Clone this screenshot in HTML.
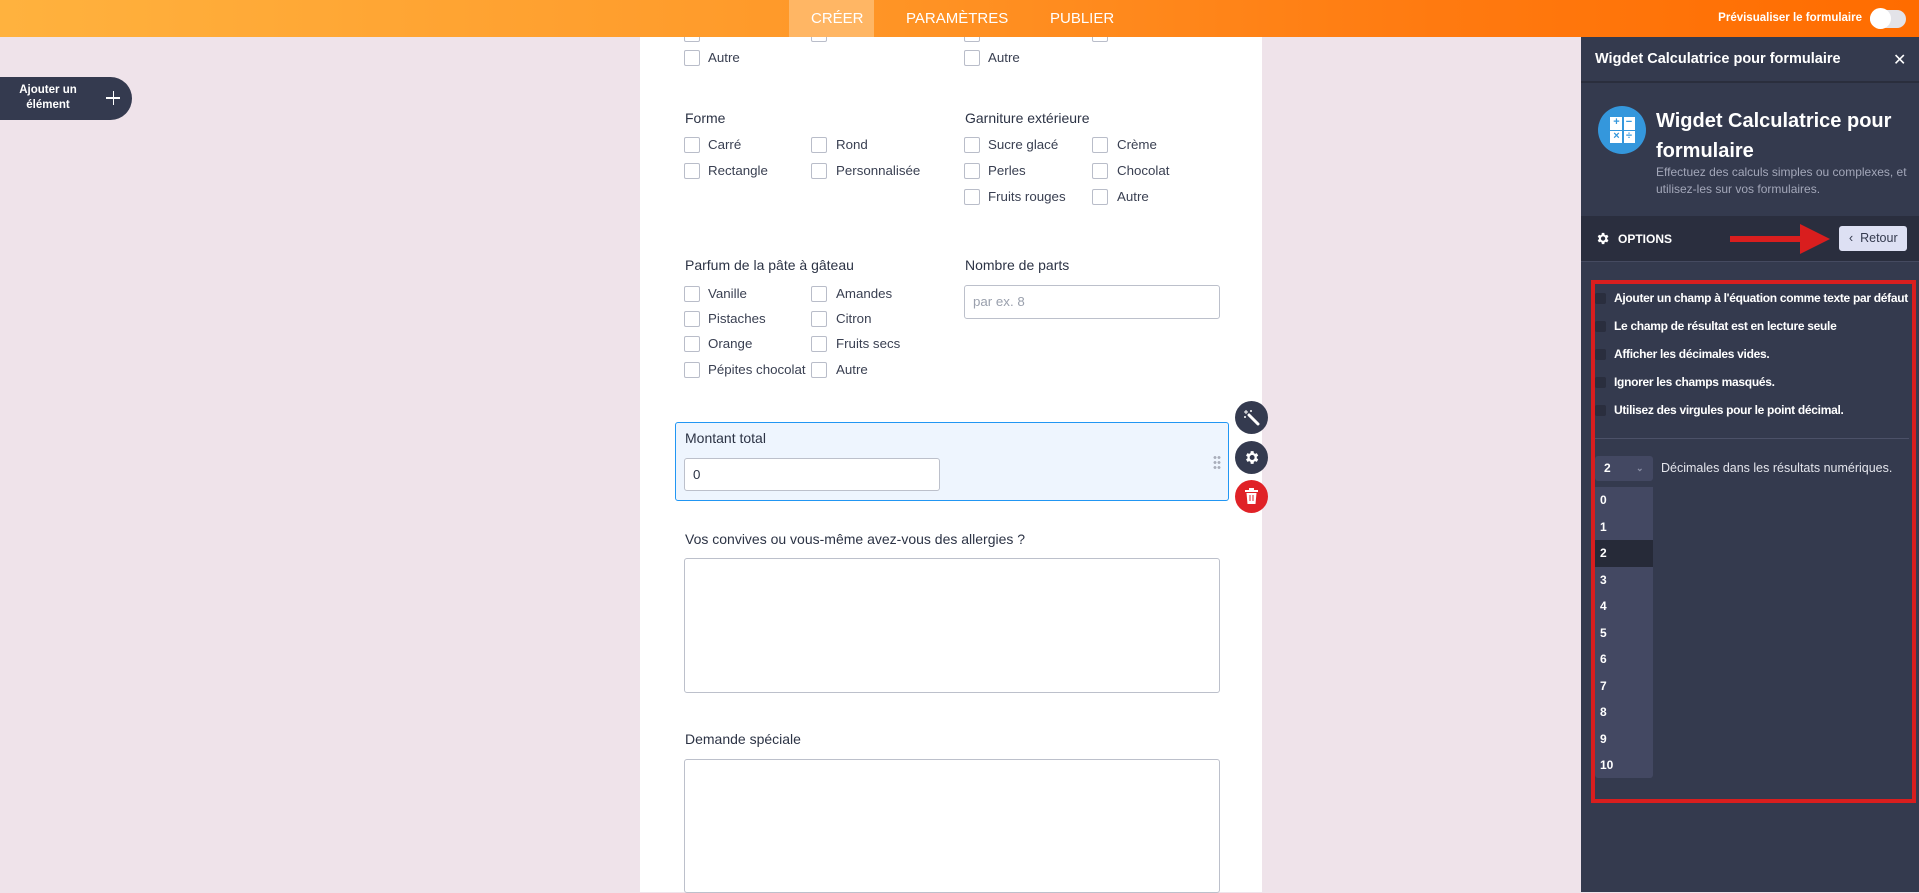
<!DOCTYPE html>
<html><head><meta charset="utf-8"><style>
*{box-sizing:border-box;margin:0;padding:0}
body{width:1919px;height:892px;overflow:hidden;background:#efe3ea;font-family:"Liberation Sans",sans-serif;position:relative}
.abs{position:absolute}
.top{left:0;top:0;width:1919px;height:37px;background:linear-gradient(90deg,#ffb23e 0%,#ff9a2a 40%,#ff7a10 75%,#ff6c00 100%);z-index:5}
.tab{position:absolute;top:0;height:37px;line-height:37px;color:#fff;font-size:15px;letter-spacing:0}
.card{left:640px;top:0;width:622px;height:892px;background:#fff}
.cb{position:absolute;width:16px;height:16px;border:1px solid #b9bdc9;border-radius:2px;background:#fff}
.t{position:absolute;font-size:13.3px;color:#3a4052;white-space:nowrap}
.lbl{position:absolute;font-size:14px;color:#2c3345;white-space:nowrap}
.inp{position:absolute;border:1px solid #bcc0cb;border-radius:3px;background:#fff}
.circ{position:absolute;width:33px;height:33px;border-radius:50%;background:#343a4f}
.panel{left:1581px;top:37px;width:338px;height:855px;background:#343a4e}
.opt{position:absolute;left:1614px;font-size:12px;font-weight:bold;color:#fff;white-space:nowrap;letter-spacing:-.3px}
.ocb{position:absolute;left:1595px;width:11px;height:11px;background:#2a2e3e;border-radius:2px}
.dd div{height:26.5px;line-height:26.5px;padding-left:5px;color:#fff;font-size:12px;font-weight:bold}
</style></head><body>
<div class="abs top">
  <div class="abs" style="left:789px;top:0;width:85px;height:37px;background:#ffb664"></div>
  <div class="tab" style="left:811px">CRÉER</div>
  <div class="tab" style="left:906px">PARAMÈTRES</div>
  <div class="tab" style="left:1050px">PUBLIER</div>
  <div class="tab" style="left:1660px;width:202px;text-align:right;font-size:11.5px;font-weight:bold">Prévisualiser le formulaire</div>
  <div class="abs" style="left:1870px;top:10px;width:36px;height:18px;border-radius:9px;background:#e3e3e8"></div>
  <div class="abs" style="left:1870px;top:8px;width:21px;height:21px;border-radius:50%;background:#fff"></div>
</div>

<div class="abs" style="left:0;top:77px;width:132px;height:43px;background:#343a4f;border-radius:0 22px 22px 0"></div>
<div class="abs" style="left:14px;top:83px;width:68px;text-align:center;color:#fff;font-size:11.5px;font-weight:bold;line-height:15px">Ajouter un élément</div>
<div class="abs" style="left:106px;top:97px;width:14px;height:1.5px;background:#fff"></div>
<div class="abs" style="left:112.5px;top:91px;width:1.5px;height:14px;background:#fff"></div>

<div class="abs card"></div>
<div class="cb" style="left:684px;top:26px"></div><div class="cb" style="left:811px;top:26px"></div><div class="cb" style="left:964px;top:26px"></div><div class="cb" style="left:1092px;top:26px"></div>
<div class="cb" style="left:684px;top:50px"></div><div class="t" style="left:708px;top:50px">Autre</div>
<div class="cb" style="left:964px;top:50px"></div><div class="t" style="left:988px;top:50px">Autre</div>

<div class="lbl" style="left:685px;top:110px">Forme</div>
<div class="lbl" style="left:965px;top:110px">Garniture extérieure</div>
<div class="cb" style="left:684px;top:137px"></div><div class="t" style="left:708px;top:137px">Carré</div>
<div class="cb" style="left:811px;top:137px"></div><div class="t" style="left:836px;top:137px">Rond</div>
<div class="cb" style="left:964px;top:137px"></div><div class="t" style="left:988px;top:137px">Sucre glacé</div>
<div class="cb" style="left:1092px;top:137px"></div><div class="t" style="left:1117px;top:137px">Crème</div>
<div class="cb" style="left:684px;top:163px"></div><div class="t" style="left:708px;top:163px">Rectangle</div>
<div class="cb" style="left:811px;top:163px"></div><div class="t" style="left:836px;top:163px">Personnalisée</div>
<div class="cb" style="left:964px;top:163px"></div><div class="t" style="left:988px;top:163px">Perles</div>
<div class="cb" style="left:1092px;top:163px"></div><div class="t" style="left:1117px;top:163px">Chocolat</div>
<div class="cb" style="left:964px;top:189px"></div><div class="t" style="left:988px;top:189px">Fruits rouges</div>
<div class="cb" style="left:1092px;top:189px"></div><div class="t" style="left:1117px;top:189px">Autre</div>

<div class="lbl" style="left:685px;top:257px">Parfum de la pâte à gâteau</div>
<div class="lbl" style="left:965px;top:257px">Nombre de parts</div>
<div class="inp" style="left:964px;top:285px;width:256px;height:34px"></div>
<div class="t" style="left:973px;top:294px;color:#9aa0ad">par ex. 8</div>
<div class="cb" style="left:684px;top:286px"></div><div class="t" style="left:708px;top:286px">Vanille</div>
<div class="cb" style="left:811px;top:286px"></div><div class="t" style="left:836px;top:286px">Amandes</div>
<div class="cb" style="left:684px;top:311px"></div><div class="t" style="left:708px;top:311px">Pistaches</div>
<div class="cb" style="left:811px;top:311px"></div><div class="t" style="left:836px;top:311px">Citron</div>
<div class="cb" style="left:684px;top:336px"></div><div class="t" style="left:708px;top:336px">Orange</div>
<div class="cb" style="left:811px;top:336px"></div><div class="t" style="left:836px;top:336px">Fruits secs</div>
<div class="cb" style="left:684px;top:362px"></div><div class="t" style="left:708px;top:362px">Pépites chocolat</div>
<div class="cb" style="left:811px;top:362px"></div><div class="t" style="left:836px;top:362px">Autre</div>

<div class="abs" style="left:675px;top:422px;width:554px;height:79px;background:#eef5fe;border:1.5px solid #2196f3;border-radius:3px"></div>
<div class="lbl" style="left:685px;top:430px">Montant total</div>
<div class="inp" style="left:684px;top:458px;width:256px;height:33px"></div>
<div class="t" style="left:693px;top:467px;color:#2c3345">0</div>
<div class="abs" style="left:1213px;top:455px;width:8px;height:15px;background:radial-gradient(circle,#a9aebb 1.3px,transparent 1.6px) 0 0/4px 5px"></div>
<div class="circ" style="left:1235px;top:401px"></div>
<svg class="abs" style="left:1243px;top:409px" width="17" height="17" viewBox="0 0 17 17"><path d="M6 6L15 15" stroke="#fff" stroke-width="3" stroke-linecap="round"/><path d="M3 1v4M1 3h4M8 1v2M7 2h2M1 8h2M2 7v2" stroke="#fff" stroke-width="1"/></svg>
<div class="circ" style="left:1235px;top:441px"></div>
<svg class="abs" style="left:1243px;top:449px" width="17" height="17" viewBox="0 0 24 24"><path fill="#fff" d="M19.4 13a7.5 7.5 0 000-2l2.1-1.6-2-3.5-2.5 1a7 7 0 00-1.7-1L14.9 3h-4l-.4 2.9a7 7 0 00-1.7 1l-2.5-1-2 3.5L6.4 11a7.5 7.5 0 000 2l-2.1 1.6 2 3.5 2.5-1a7 7 0 001.7 1l.4 2.9h4l.4-2.9a7 7 0 001.7-1l2.5 1 2-3.5zM12.9 15.5a3.5 3.5 0 110-7 3.5 3.5 0 010 7z"/></svg>
<div class="circ" style="left:1235px;top:480px;background:#e02227"></div>
<svg class="abs" style="left:1244px;top:488px" width="15" height="17" viewBox="0 0 15 17"><rect x="1" y="2" width="13" height="2" fill="#fff"/><rect x="5" y="0" width="5" height="2" fill="#fff"/><path d="M2.5 5h10l-1 11h-8z" fill="#fff"/><path d="M6 7v6M9 7v6" stroke="#e02227" stroke-width="1"/></svg>

<div class="lbl" style="left:685px;top:531px">Vos convives ou vous-même avez-vous des allergies ?</div>
<div class="inp" style="left:684px;top:558px;width:536px;height:135px"></div>
<div class="lbl" style="left:685px;top:731px">Demande spéciale</div>
<div class="inp" style="left:684px;top:759px;width:536px;height:134px"></div>

<div class="abs panel"></div>
<div class="abs" style="left:1581px;top:37px;width:338px;height:46px;background:#343a4e;border-bottom:2px solid #2a2e3d"></div>
<div class="abs" style="left:1595px;top:51px;color:#fff;font-size:14.5px;font-weight:bold">Wigdet Calculatrice pour formulaire</div>
<div class="abs" style="left:1893px;top:50px;color:#fff;font-size:16px">✕</div>
<div class="abs" style="left:1598px;top:106px;width:48px;height:48px;border-radius:50%;background:#3497dc"></div>
<div class="abs" style="left:1610px;top:117px;width:25px;height:26px;background:#fff"></div>
<div class="abs" style="left:1622px;top:117px;width:1.5px;height:26px;background:#3497dc"></div>
<div class="abs" style="left:1610px;top:129.5px;width:25px;height:1.5px;background:#3497dc"></div>
<div class="abs" style="left:1610px;top:115px;width:13px;text-align:center;color:#3497dc;font-size:11px;font-weight:bold;line-height:14px">+<br>×</div>
<div class="abs" style="left:1623px;top:115px;width:12px;text-align:center;color:#3497dc;font-size:11px;font-weight:bold;line-height:14px">−<br>÷</div>
<div class="abs" style="left:1656px;top:106px;color:#fff;font-size:20px;font-weight:bold;line-height:30px;width:250px">Wigdet Calculatrice pour formulaire</div>
<div class="abs" style="left:1656px;top:164px;color:#a3a7b9;font-size:12px;line-height:17px;width:260px">Effectuez des calculs simples ou complexes, et utilisez-les sur vos formulaires.</div>
<div class="abs" style="left:1581px;top:216px;width:338px;height:46px;background:#2a2e3e;border-bottom:1px solid #454a60"></div>
<svg class="abs" style="left:1595px;top:231px" width="15" height="15" viewBox="0 0 24 24"><path fill="#fff" d="M19.4 13a7.5 7.5 0 000-2l2.1-1.6-2-3.5-2.5 1a7 7 0 00-1.7-1L14.9 3h-4l-.4 2.9a7 7 0 00-1.7 1l-2.5-1-2 3.5L6.4 11a7.5 7.5 0 000 2l-2.1 1.6 2 3.5 2.5-1a7 7 0 001.7 1l.4 2.9h4l.4-2.9a7 7 0 001.7-1l2.5 1 2-3.5zM12.9 15.5a3.5 3.5 0 110-7 3.5 3.5 0 010 7z"/></svg>
<div class="abs" style="left:1618px;top:232px;color:#fff;font-size:12px;font-weight:bold">OPTIONS</div>
<svg class="abs" style="left:1728px;top:222px" width="104" height="34"><rect x="2" y="14" width="72" height="6" fill="#d91e1e"/><path d="M72 2L102 17L72 32z" fill="#d91e1e"/></svg>
<div class="abs" style="left:1839px;top:226px;width:68px;height:25px;background:#dde0f3;border-radius:3px;color:#343a4e;font-size:12.5px;line-height:25px;padding-left:10px">‹&nbsp;&nbsp;Retour</div>

<div class="abs" style="left:1591px;top:280px;width:325px;height:523px;border:4px solid #d91e1e"></div>
<div class="ocb" style="top:293px"></div><div class="opt" style="top:291px">Ajouter un champ à l'équation comme texte par défaut</div>
<div class="ocb" style="top:321px"></div><div class="opt" style="top:319px">Le champ de résultat est en lecture seule</div>
<div class="ocb" style="top:349px"></div><div class="opt" style="top:347px">Afficher les décimales vides.</div>
<div class="ocb" style="top:377px"></div><div class="opt" style="top:375px">Ignorer les champs masqués.</div>
<div class="ocb" style="top:405px"></div><div class="opt" style="top:403px">Utilisez des virgules pour le point décimal.</div>
<div class="abs" style="left:1595px;top:438px;width:314px;height:1px;background:#4c5168"></div>
<div class="abs" style="left:1595px;top:456px;width:58px;height:25px;background:#434862;border-radius:3px;color:#fff;font-size:12px;font-weight:bold;line-height:25px;padding-left:9px">2<span style="position:absolute;left:41px;top:0;color:#8a8fa5;font-size:9px">⌄</span></div>
<div class="abs" style="left:1661px;top:461px;color:#e4e5ec;font-size:12.5px">Décimales dans les résultats numériques.</div>
<div class="abs dd" style="left:1595px;top:487px;width:58px;height:291px;background:#434862;border-radius:0 0 3px 3px">
<div>0</div><div>1</div><div style="background:#262a38">2</div><div>3</div><div>4</div><div>5</div><div>6</div><div>7</div><div>8</div><div>9</div><div>10</div>
</div>
</body></html>
